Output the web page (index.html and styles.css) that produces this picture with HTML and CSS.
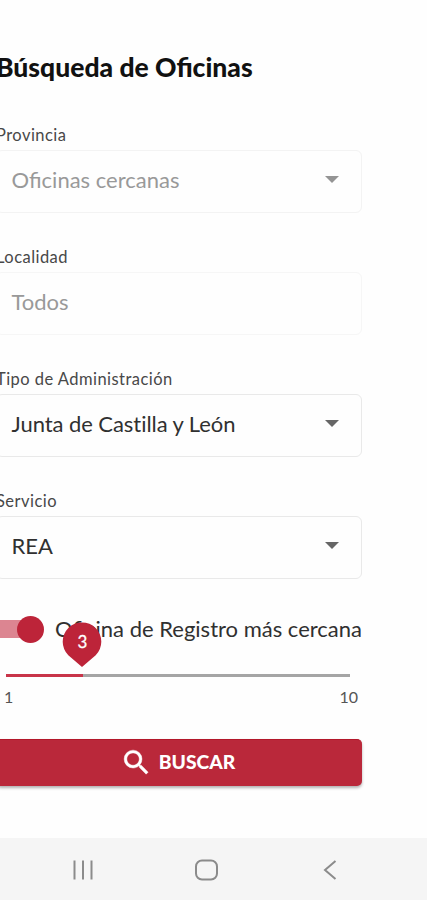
FILE: index.html
```html
<!DOCTYPE html>
<html lang="es">
<head>
<meta charset="utf-8">
<title>Búsqueda de Oficinas</title>
<link rel="stylesheet" href="styles.css">
</head>
<body>
<main class="form">
  <h1 class="title"><span>Búsqueda de Oficinas</span></h1>
  <section class="field disabled">
    <div class="label"><span>Provincia</span></div>
    <div class="control"><span>Oficinas cercanas</span><svg class="arrow" viewBox="0 0 14 7"><path d="M0 0h14L7 7z"/></svg></div>
  </section>
  <section class="field disabled faint">
    <div class="label"><span>Localidad</span></div>
    <div class="control"><span>Todos</span></div>
  </section>
  <section class="field">
    <div class="label"><span>Tipo de Administración</span></div>
    <div class="control"><span class="plain">Junta de Castilla y León</span><svg class="arrow" viewBox="0 0 14 7"><path d="M0 0h14L7 7z"/></svg></div>
  </section>
  <section class="field">
    <div class="label"><span>Servicio</span></div>
    <div class="control"><span>REA</span><svg class="arrow" viewBox="0 0 14 7"><path d="M0 0h14L7 7z"/></svg></div>
  </section>
  <div class="toggle-row">
    <div class="switch"><div class="knob"></div></div>
    <span class="toggle-text">Oficina de Registro más cercana</span>
  </div>
  <div class="slider">
    <div class="track"><div class="filled"></div></div>
    <div class="pin">
      <svg viewBox="0 0 40 46"><path d="M6.300 33.300A19.300 19.300 0 1 1 33.700 33.300L20 45z"/></svg>
      <span>3</span>
    </div>
    <div class="marks"><span>1</span><span>10</span></div>
  </div>
  <button class="search">
    <svg viewBox="0 0 24 24"><path d="M15.5 14h-.79l-.28-.27A6.47 6.47 0 0 0 16 9.5 6.5 6.5 0 1 0 9.5 16c1.61 0 3.09-.59 4.23-1.57l.27.28v.79l5 4.99L20.49 19zm-6 0C7.01 14 5 11.99 5 9.5S7.01 5 9.5 5 14 7.01 14 9.5 11.99 14 9.5 14z"/></svg>
    <span>BUSCAR</span>
  </button>
</main>
<nav class="navbar">
  <svg viewBox="0 0 24 24"><path d="M3.500 2.500v19M12 2.500v19M20.500 2.500v19"/></svg>
  <svg viewBox="0 0 24 24"><rect x="2" y="2.500" width="21" height="19" rx="6"/></svg>
  <svg viewBox="0 0 24 24"><path d="M18.500 3L8 12 18.500 21"/></svg>
</nav>
</body>
</html>
```
FILE: styles.css
```css
* { box-sizing: border-box; }
body {
  margin: 0;
  height: 900px;
  display: flex;
  flex-direction: column;
  overflow: hidden;
  background: #fefefe;
  color: #303030;
  font-family: Lato, sans-serif;
}
.form {
  width: 366px;
  height: 838px;
  margin-left: -4px;
  padding-top: 49px;
}
.title {
  margin: 0 0 39px;
  height: 36px;
  font-size: 26.500px;
  line-height: 36px;
  font-weight: 900;
  color: #111;
  white-space: nowrap;
}
.field { height: 122px; }
.label {
  height: 26px;
  font-size: 16.500px;
  line-height: 22px;
  letter-spacing: .46px;
  color: #484848;
  white-space: nowrap;
}
.control {
  display: flex;
  align-items: center;
  justify-content: space-between;
  height: 63px;
  padding: 0 22px 5px 14.500px;
  border: 1.500px solid #e9e9e9;
  border-radius: 6px;
  font-size: 22px;
  white-space: nowrap;
}
.plain { font-variant-ligatures: none; letter-spacing: -.06px; }
.disabled .control { color: #999; border-color: #f3f3f3; }
.faint .control { border-color: #f6f6f6; }
.arrow { width: 14px; height: 7px; fill: #666; }
.disabled .arrow { fill: #949494; }
.toggle-row {
  display: flex;
  align-items: center;
  height: 34px;
}
.switch {
  width: 54px;
  height: 18px;
  margin: 0 12px 0 -6px;
  display: flex;
  align-items: center;
  justify-content: flex-end;
  border-radius: 9px;
  background: #dc8591;
}
.knob { width: 27px; height: 27px; margin-right: -1px; flex: none; border-radius: 50%; background: #bd2439; }
.toggle-text { font-size: 22px; line-height: 26px; padding-bottom: 1px; white-space: nowrap; }
.slider { position: relative; height: 93px; padding: 28px 0 0 10px; }
.track { width: 344px; height: 3px; background: #a5a5a5; }
.filled { width: 77px; height: 3px; background: #c83449; }
.pin {
  position: absolute;
  left: 66px;
  top: -24px;
  width: 40px;
  height: 46px;
}
.pin svg { width: 40px; height: 46px; fill: #bd2439; display: block; }
.pin span {
  position: absolute;
  inset: 0 -1px 6px 0;
  text-align: center;
  line-height: 39px;
  font-size: 17px;
  -webkit-text-stroke: .3px #fff;
  color: #fff;
}
.marks {
  display: flex;
  justify-content: space-between;
  width: 354px;
  margin-left: -2px;
  padding-top: 9px;
  font-size: 16px;
  line-height: 22px;
  color: #555;
}
.search {
  display: flex;
  align-items: center;
  justify-content: center;
  gap: 6px;
  width: 100%;
  height: 47px;
  padding: 0 3px 2px 0;
  border: 0;
  border-top: 1px solid #b3172a;
  border-radius: 5px;
  background: #ba283a;
  box-shadow: 0 2px 3px rgba(0,0,0,.3);
  color: #fff;
  font: 900 19.300px/44px Lato, sans-serif;
}
.search svg { width: 33px; height: 33px; fill: #fff; stroke: #fff; stroke-width: .3; }
.navbar {
  display: flex;
  align-items: center;
  gap: 99px;
  height: 62px;
  padding: 2px 0 0 71px;
  background: #f5f5f5;
}
.navbar svg { width: 24px; height: 24px; fill: none; stroke: #8b8b8b; stroke-width: 2; }
```
